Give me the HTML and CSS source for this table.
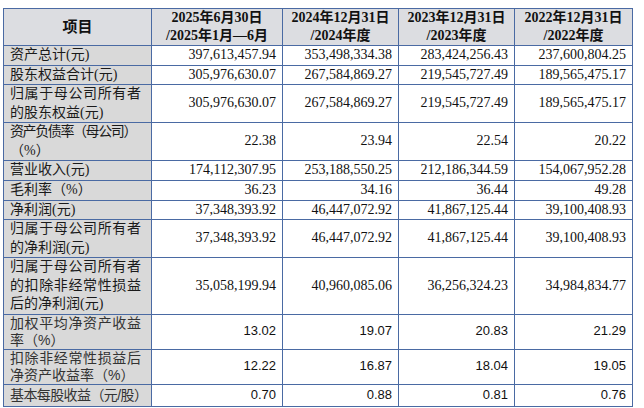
FILE: index.html
```html
<!DOCTYPE html>
<html lang="zh-CN">
<head>
<meta charset="utf-8">
<link rel="stylesheet" href="styles.css">
</head>
<body>
<table class="fin">
  <colgroup>
    <col class="c-label"><col class="c-a"><col class="c-b"><col class="c-c"><col class="c-d">
  </colgroup>
  <thead>
    <tr class="h-head">
      <th class="th-item">项目</th>
      <th>2025年6月30日<br>/2025年1月—6月</th>
      <th>2024年12月31日<br>/2024年度</th>
      <th>2023年12月31日<br>/2023年度</th>
      <th>2022年12月31日<br>/2022年度</th>
    </tr>
  </thead>
  <tbody>
    <tr class="h1">
      <td class="lab">资产总计(元)</td>
      <td>397,613,457.94</td><td>353,498,334.38</td><td>283,424,256.43</td><td>237,600,804.25</td>
    </tr>
    <tr class="h1">
      <td class="lab">股东权益合计(元)</td>
      <td>305,976,630.07</td><td>267,584,869.27</td><td>219,545,727.49</td><td>189,565,475.17</td>
    </tr>
    <tr class="h2">
      <td class="lab"><span class="full">归属于母公司所有者</span><span class="ln">的股东权益(元)</span></td>
      <td>305,976,630.07</td><td>267,584,869.27</td><td>219,545,727.49</td><td>189,565,475.17</td>
    </tr>
    <tr class="h2">
      <td class="lab"><span class="ln tight">资产负债率（母公司）</span><span class="ln">（%）</span></td>
      <td>22.38</td><td>23.94</td><td>22.54</td><td>20.22</td>
    </tr>
    <tr class="h1">
      <td class="lab">营业收入(元)</td>
      <td>174,112,307.95</td><td>253,188,550.25</td><td>212,186,344.59</td><td>154,067,952.28</td>
    </tr>
    <tr class="h1b">
      <td class="lab">毛利率（%）</td>
      <td>36.23</td><td>34.16</td><td>36.44</td><td>49.28</td>
    </tr>
    <tr class="h1c">
      <td class="lab">净利润(元)</td>
      <td>37,348,393.92</td><td>46,447,072.92</td><td>41,867,125.44</td><td>39,100,408.93</td>
    </tr>
    <tr class="h2">
      <td class="lab"><span class="full">归属于母公司所有者</span><span class="ln">的净利润(元)</span></td>
      <td>37,348,393.92</td><td>46,447,072.92</td><td>41,867,125.44</td><td>39,100,408.93</td>
    </tr>
    <tr class="h3">
      <td class="lab"><span class="full">归属于母公司所有者</span><span class="full">的扣除非经常性损益</span><span class="ln">后的净利润(元)</span></td>
      <td>35,058,199.94</td><td>40,960,085.06</td><td>36,256,324.23</td><td>34,984,834.77</td>
    </tr>
    <tr class="h2b sans">
      <td class="lab"><span class="full">加权平均净资产收益</span><span class="ln">率（%）</span></td>
      <td>13.02</td><td>19.07</td><td>20.83</td><td>21.29</td>
    </tr>
    <tr class="h2c sans">
      <td class="lab"><span class="full">扣除非经常性损益后</span><span class="ln">净资产收益率（%）</span></td>
      <td>12.22</td><td>16.87</td><td>18.04</td><td>19.05</td>
    </tr>
    <tr class="hlast sans">
      <td class="lab"><span class="ln tight2">基本每股收益（元/股）</span></td>
      <td>0.70</td><td>0.88</td><td>0.81</td><td>0.76</td>
    </tr>
  </tbody>
</table>
</body>
</html>
```
FILE: styles.css
```css
html, body {
  margin: 0;
  padding: 0;
  background: #ffffff;
}

.fin {
  margin: 8px 0 0 3px;
  border-collapse: collapse;
  table-layout: fixed;
  width: 629px;
  font-family: "Liberation Serif", "Noto Sans CJK SC", serif;
  font-size: 14px;
  color: #111111;
}

.c-label { width: 148px; }
.c-a { width: 131px; }
.c-b { width: 116px; }
.c-c { width: 116px; }
.c-d { width: 118px; }

.fin th,
.fin td {
  border: 1px solid #4a6aa3;
  padding: 0 6px;
  vertical-align: middle;
  overflow: hidden;
}

.fin th {
  background: #dcdde1;
  font-weight: bold;
  text-align: center;
  line-height: 18px;
  color: #111111;
  white-space: nowrap;
}

.th-item {
  font-size: 15px;
}

.fin td {
  text-align: right;
  line-height: 18.5px;
  white-space: nowrap;
}

.fin td.lab {
  background: #d9d9d9;
  text-align: left;
  padding: 0 10px 0 6px;
  color: #1a1a1a;
}

.lab .full {
  display: block;
  text-align: justify;
  text-align-last: justify;
}

.lab .ln {
  display: block;
}

.lab .tight {
  letter-spacing: -1.4px;
  margin-right: -10px;
}

.lab .tight2 {
  letter-spacing: -0.6px;
  margin-right: -10px;
}

.sans td {
  font-family: "Liberation Sans", "Noto Sans CJK SC", sans-serif;
  font-size: 13px;
}

.sans td.lab {
  font-family: "Liberation Sans", "Noto Sans CJK SC", sans-serif;
  font-size: 14px;
  line-height: 17px;
  color: #333333;
}

.h-head { height: 37px; }
.h1 { height: 19px; }
.h1b { height: 20px; }
.h1c { height: 18px; }
.h2 { height: 37px; }
.h3 { height: 56px; }
.h2b { height: 34px; }
.h2c { height: 35px; }
.hlast { height: 22px; }
```
